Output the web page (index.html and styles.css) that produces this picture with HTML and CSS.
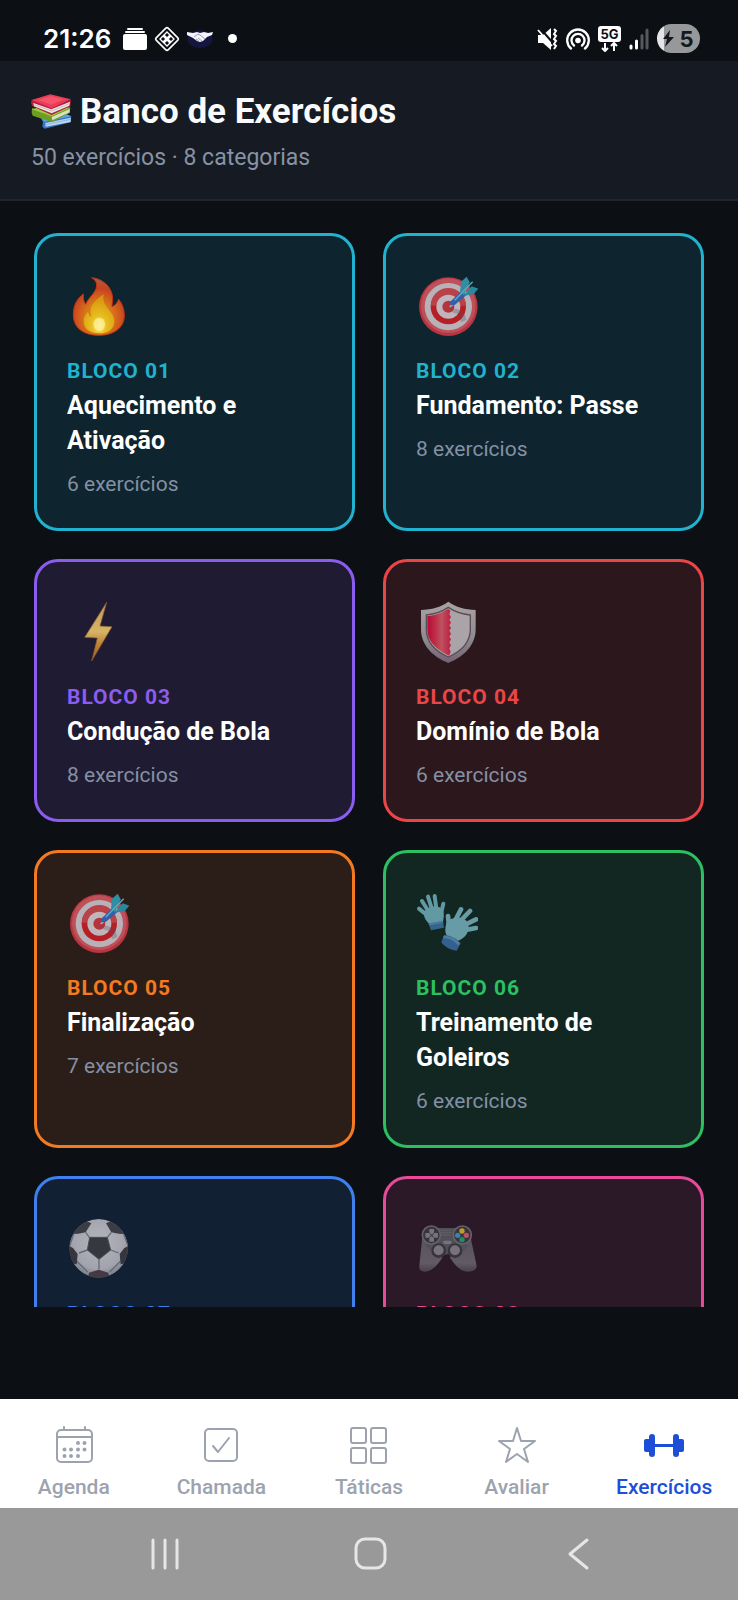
FILE: index.html
```html
<!DOCTYPE html>
<html lang="pt-BR">
<head>
    <meta charset="UTF-8">
    <meta name="viewport" content="width=device-width, initial-scale=1.0">
    <title>Banco de Exercícios</title>
    <link rel="stylesheet" href="styles.css">
</head>
<body>
    <div class="app">
        <div class="status-bar">
            <div class="status-left">
                <span class="time">21:26</span>
                <svg width="24" height="22" viewBox="0 0 24 22" fill="#fff">
                    <rect x="4" y="0" width="16" height="2" rx="1"/>
                    <rect x="2" y="3" width="20" height="2" rx="1"/>
                    <rect x="0" y="6" width="24" height="16" rx="2"/>
                </svg>
                <svg width="26" height="26" viewBox="0 0 26 26" fill="none" stroke="#fff">
                    <rect x="4.500" y="4.500" width="17" height="17" rx="2" stroke-width="1.600" transform="rotate(45 13 13)"/>
                    <path d="M13 6l3 3-3 3-3-3zM13 20l3-3-3-3-3 3zM6 13l3-3 3 3-3 3zM20 13l-3-3-3 3 3 3zM9 9l8 8M17 9l-8 8" stroke-width="1.300"/>
                </svg>
                <svg width="26" height="20" viewBox="0 0 26 20">
                    <ellipse cx="13" cy="10" rx="12.500" ry="9" fill="#15163f"/>
                    <path d="M0 3l6 1 4-1 3 1 4-1 4 1 5-1-1 3-5 2-4 4-3 1-3-1-4-3-4-2-2-1z" fill="#f4f5fb"/>
                    <path d="M7 8l4-3 2 1 5 4M9 10l3 2M11 9l4 3" fill="none" stroke="#8288a5" stroke-width=".8"/>
                </svg>
                <span class="dot"></span>
            </div>
            <div class="status-right">
                <svg width="21" height="22" viewBox="0 0 21 22" fill="#fff">
                    <path d="M1 7h5l8-7v22l-8-7H1z"/>
                    <path d="M3 0l13 15" stroke="#0d1015" stroke-width="2"/>
                    <path d="M1 2l14 16" stroke="#fff" stroke-width="1.800"/>
                    <path d="M17 1l2 2-2 3 2 2-2 3 2 2-2 3 2 2-2 3" fill="none" stroke="#fff" stroke-width="2"/>
                </svg>
                <svg width="24" height="22" viewBox="0 0 24 22" fill="none" stroke="#fff" stroke-width="2.300" stroke-linecap="round">
                    <circle cx="12" cy="12.500" r="2.800" fill="#fff" stroke="none"/>
                    <path d="M8 17.500a6.500 6.500 0 1 1 8 0M5 20.500a10.800 10.800 0 1 1 14 0"/>
                </svg>
                <svg width="23" height="26" viewBox="0 0 23 26">
                    <rect width="23" height="16" rx="3" fill="#fff"/>
                    <text x="11.500" y="13" class="net-text" text-anchor="middle">5G</text>
                    <path d="M7 17v8M4 22l3 3 3-3M16 25v-8M13 20l3-3 3 3" fill="none" stroke="#fff" stroke-width="2"/>
                </svg>
                <svg width="20" height="22" viewBox="0 0 20 22" stroke-width="3" stroke-linecap="round">
                    <path d="M2 18v2M7.500 13v7" stroke="#fff"/>
                    <path d="M13 7.500v12.500M18 2v18" stroke="#55585d"/>
                </svg>
                <div class="battery">
                    <svg width="11" height="17" viewBox="0 0 11 17" fill="#15181d"><path d="M7 0L0 9h4l-2 8 9-10H6z"/></svg>
                    <span>5</span>
                </div>
            </div>
        </div>

        <header class="header">
            <h1>
                <svg width="41" height="35" viewBox="0 0 123 105">
                    <path d="M25 65L75 48l46 19-2 18-78 19-7-6 2-14z" fill="#3978c8"/>
                    <path d="M43 87l76-16v13L44 98z" fill="#b9d5f0"/>
                    <path d="M43 92l76-16" stroke="#7fa5cf" stroke-width="2"/>
                    <path d="M26 66l14 17 80-16-44-19z" fill="#5ba2e8"/>
                    <path d="M3 42l57 18 58-20-2 17-53 27L5 65l-3-9z" fill="#6f9d22"/>
                    <path d="M62 69l54-24v10L64 79z" fill="#d6e2bd"/>
                    <path d="M3 46l59 21 55-26-57-12z" fill="#9bcc42"/>
                    <path d="M2 18l60 22 58-23-2 20-56 26L4 37l-4-9z" fill="#b51e3b"/>
                    <path d="M7 27l54 19 56-23-2 12-53 23L9 37z" fill="#eee3e4"/>
                    <path d="M8 31l54 20 53-22" fill="none" stroke="#b9a6aa" stroke-width="2"/>
                    <path d="M1 18L58 1l62 15-58 27z" fill="#ec3b57"/>
                    <path d="M20 18l39-12 40 10-38 16z" fill="#f5536a"/>
                </svg>
                <span>Banco de Exercícios</span>
            </h1>
            <p>50 exercícios · 8 categorias</p>
        </header>

        <main class="content">
            <div class="grid">
                <a href="#bloco-01" class="card cyan">
                    <svg class="emoji" viewBox="0 0 186 186">
                        <defs>
                            <radialGradient id="fire-out" cx=".5" cy=".7" r=".65"><stop offset=".4" stop-color="#d97a18"/><stop offset=".8" stop-color="#c9421f"/><stop offset="1" stop-color="#b05a3c"/></radialGradient>
                            <radialGradient id="fire-in" cx=".5" cy=".8" r=".7"><stop offset="0" stop-color="#fff3a0"/><stop offset=".35" stop-color="#e8c020"/><stop offset="1" stop-color="#d9960f"/></radialGradient>
                        </defs>
                        <path d="M74 8c36 3 64 32 63 65-1 11-2 17-2 22 9-3 15-10 20-22 12 15 17 31 17 49 0 36-32 59-76 59-46 0-77-22-77-62 0-28 11-48 30-62-1 13 1 23 7 31 8-21 31-34 33-55 1-11-5-20-15-25z" fill="url(#fire-out)" stroke="#bd3418" stroke-width="3"/>
                        <path d="M110 58c-4 20 3 30 14 44 12 15 18 25 18 36 0 25-18 37-45 37s-47-12-47-36c0-13 5-20 13-29 2 8 5 13 10 16-10-30 8-48 37-68z" fill="url(#fire-in)"/>
                        <ellipse cx="97" cy="148" rx="17" ry="20" fill="#fff09a" opacity=".75"/>
                    </svg>
                    <span class="block-number">BLOCO 01</span>
                    <h2>Aquecimento e Ativação</h2>
                    <p>6 exercícios</p>
                </a>

                <a href="#bloco-02" class="card cyan">
                    <svg class="emoji" viewBox="0 0 186 186">
                        <g id="target">
                            <circle cx="97" cy="95" r="88" fill="#b63540"/>
                            <circle cx="97" cy="92" r="82" fill="#bd5058"/>
                            <circle cx="97" cy="95" r="71" fill="#b9b1b8"/>
                            <circle cx="97" cy="95" r="53" fill="#b51f25"/>
                            <path d="M44 92a53 53 0 0 1 106 0z" fill="#b94148"/>
                            <circle cx="97" cy="95" r="36" fill="#bfb6bb"/>
                            <circle cx="97" cy="95" r="18" fill="#b4343d"/>
                            <path d="M98 98l13 15 17 4 7 25 16-7-6-20-21-13z" fill="#5a4c58" opacity=".3"/>
                            <path d="M99 96l5 1 22-19-6-7z" fill="#9fb5d5"/>
                            <path d="M101 82l36-35 14 14-35 29-11 1z" fill="#315faa"/>
                            <path d="M132 52l3-32 17-15 9 17-17 39z" fill="#318da1"/>
                            <path d="M142 62l25-28 20 7-14 17-31 4z" fill="#2b879c"/>
                            <path d="M116 76l54-56" stroke="#62abc0" stroke-width="4"/>
                        </g>
                    </svg>
                    <span class="block-number">BLOCO 02</span>
                    <h2>Fundamento: Passe</h2>
                    <p>8 exercícios</p>
                </a>

                <a href="#bloco-03" class="card purple">
                    <svg class="emoji" viewBox="0 0 186 186">
                        <defs>
                            <linearGradient id="bolt" x1="0" y1="0" x2="0" y2="1"><stop offset="0" stop-color="#c09a58"/><stop offset=".5" stop-color="#d5b466"/><stop offset=".7" stop-color="#c18436"/><stop offset="1" stop-color="#9c5c26"/></linearGradient>
                        </defs>
                        <path d="M119 4L53 109l38 2-17 69 61-103-36-2z" fill="url(#bolt)" stroke="#8b5b2d" stroke-width="2" stroke-linejoin="round"/>
                    </svg>
                    <span class="block-number">BLOCO 03</span>
                    <h2>Condução de Bola</h2>
                    <p>8 exercícios</p>
                </a>

                <a href="#bloco-04" class="card red">
                    <svg class="emoji" viewBox="0 0 186 186">
                        <defs>
                            <linearGradient id="rim" x1="0" y1="0" x2="0" y2="1"><stop offset="0" stop-color="#aaa3a5"/><stop offset=".6" stop-color="#8f8a90"/><stop offset="1" stop-color="#746274"/></linearGradient>
                            <linearGradient id="shield-red"><stop offset="0" stop-color="#b50b36"/><stop offset=".35" stop-color="#c02f48"/><stop offset=".6" stop-color="#bb5360"/><stop offset="1" stop-color="#c01c40"/></linearGradient>
                        </defs>
                        <path d="M97 2c23 17 49 23 82 25v58c0 44-31 81-82 101-51-20-82-57-82-101V27C48 25 74 19 97 2z" fill="url(#rim)"/>
                        <path d="M97 19c19 13 38 20 66 23v42c0 38-23 65-66 84-43-19-66-46-66-84V42c28-3 47-10 66-23z" fill="#aaa4a9" stroke="#5d4c53" stroke-width="4"/>
                        <path d="M97 23v0l6 7-3 10 5 8-5 8 5 9-5 8 5 8-5 8 5 9-5 9 5 8-5 9 5 9-5 9 4 10-5 12C57 144 34 119 34 84V45c25-3 44-9 63-22z" fill="url(#shield-red)"/>
                    </svg>
                    <span class="block-number">BLOCO 04</span>
                    <h2>Domínio de Bola</h2>
                    <p>6 exercícios</p>
                </a>

                <a href="#bloco-05" class="card orange">
                    <svg class="emoji" viewBox="0 0 186 186"><use href="#target"/></svg>
                    <span class="block-number">BLOCO 05</span>
                    <h2>Finalização</h2>
                    <p>7 exercícios</p>
                </a>

                <a href="#bloco-06" class="card green">
                    <svg class="emoji" viewBox="0 0 186 186" stroke-linecap="round" stroke-linejoin="round">
                        <g stroke="#6199a4" stroke-width="12" fill="none">
                            <path d="M36 72L9 50M40 62L18 27M50 58L36 14M62 58L56 12M74 70l8-35"/>
                        </g>
                        <path d="M24 60c8-17 40-22 54-9 8 12 6 26 2 40l-40 5C29 86 22 74 24 60z" fill="#6199a4"/>
                        <path d="M38 95l43-8 3 20-39 8z" fill="#34658c"/>
                        <path d="M41 97l38-7" stroke="#4a7a9b" stroke-width="6"/>
                        <g stroke="#679ba5" stroke-width="14" fill="none">
                            <path d="M100 112L96 72M115 90l20-38M130 90l32-33M140 102l40-20M138 116l42-8"/>
                        </g>
                        <path d="M91 94c10-20 50-25 63-4 12 24-6 52-34 58-28-6-38-22-29-54z" fill="#679ba5"/>
                        <path d="M84 129c16-1 38 10 50 25l-12 22c-19-2-36-11-46-25z" fill="#34608f"/>
                        <path d="M86 135c16 1 32 9 41 20" fill="none" stroke="#4c7fa0" stroke-width="8"/>
                    </svg>
                    <span class="block-number">BLOCO 06</span>
                    <h2>Treinamento de Goleiros</h2>
                    <p>6 exercícios</p>
                </a>

                <a href="#bloco-07" class="card blue">
                    <svg class="emoji" viewBox="0 0 186 186">
                        <defs>
                            <radialGradient id="ball" cx=".5" cy=".4" r=".6"><stop offset="0" stop-color="#b4b6bc"/><stop offset=".75" stop-color="#a2a3ad"/><stop offset="1" stop-color="#76808c"/></radialGradient>
                            <clipPath id="ball-clip"><circle cx="95" cy="91" r="88"/></clipPath>
                        </defs>
                        <g clip-path="url(#ball-clip)">
                            <circle cx="95" cy="91" r="88" fill="url(#ball)"/>
                            <path d="M67 58L56 43M121 58l12-15M131 96l24 9M61 96l-25 9M96 124v30M28 128l34 34M162 128l-34 34M20 48L8 84M170 48l13 36" fill="none" stroke="#666a76" stroke-width="4"/>
                            <path d="M68 58h53l10 38-35 28-35-28z" fill="#35383f" stroke="#4b4e58" stroke-width="3" stroke-linejoin="round"/>
                            <path d="M16 48l16-32 28-6 13 6-17 27-22 4z" fill="#3b3d45"/>
                            <path d="M174 48l-16-32-28-6-13 6 16 27 22 4z" fill="#3b3d45"/>
                            <path d="M2 82l16 8 14 18-3 31-25-5z" fill="#37363f"/>
                            <path d="M188 82l-16 8-14 18 3 31 25-5z" fill="#37363f"/>
                            <path d="M62 184l4-20 29-9 29 9 4 20z" fill="#433a46"/>
                        </g>
                    </svg>
                    <span class="block-number">BLOCO 07</span>
                </a>

                <a href="#bloco-08" class="card pink">
                    <svg class="emoji" viewBox="0 0 186 186">
                        <defs>
                            <linearGradient id="grip" x1="0" y1="0" x2="0" y2="1"><stop offset="0" stop-color="#57535c"/><stop offset=".75" stop-color="#625a65"/><stop offset="1" stop-color="#4b404b"/></linearGradient>
                        </defs>
                        <path d="M19 55l34 50 27 12c-12 20-27 37-45 43-14 4-27-2-25-17zM163 55l-34 50-28 12c12 20 27 37 45 43 16 4 37-2 36-17z" fill="url(#grip)"/>
                        <path d="M45 30h92l18 54-30 34-29-10-30 10-36-34z" fill="#525057"/>
                        <path d="M74 37h32M74 44h32M74 51h32" stroke="#625e66" stroke-width="3"/>
                        <g fill="#37343c" stroke="#66616a" stroke-width="5">
                            <circle cx="46" cy="51" r="27"/>
                            <circle cx="139" cy="51" r="27"/>
                        </g>
                        <g fill="#37343c"><circle cx="68" cy="98" r="22"/><circle cx="117" cy="98" r="22"/></g>
                        <g fill="#77727b">
                            <circle cx="68" cy="97" r="15"/>
                            <circle cx="117" cy="97" r="15"/>
                            <path d="M40 33h14v11l-7 6-7-6zM40 71h14V60l-7-6-7 6zM28 45h11l6 7-6 7H28zM66 45H55l-6 7 6 7h11z"/>
                            <rect x="82" y="68" width="24" height="10" rx="3"/>
                        </g>
                        <circle cx="138" cy="39" r="8" fill="#c29b24"/>
                        <circle cx="125" cy="52" r="8" fill="#3384b2"/>
                        <circle cx="151" cy="52" r="8" fill="#bd5264"/>
                        <circle cx="138" cy="65" r="8" fill="#218c64"/>
                    </svg>
                    <span class="block-number">BLOCO 08</span>
                </a>
            </div>
        </main>

        <nav class="tab-bar">
            <a href="#agenda" class="tab">
                <svg viewBox="0 0 42 42" fill="none" stroke="currentColor" stroke-width="2" stroke-linecap="round">
                    <rect x="4" y="6" width="35" height="32" rx="4"/>
                    <path d="M4 13h35M11 3v3M32 3v3"/>
                    <path d="M25 19h0M31.500 19h0M11.500 25.500h0M18 25.500h0M25 25.500h0M31.500 25.500h0M11.500 32h0M18 32h0M25 32h0" stroke-width="4"/>
                </svg>
                <span>Agenda</span>
            </a>
            <a href="#chamada" class="tab">
                <svg viewBox="0 0 42 42" fill="none" stroke="currentColor" stroke-width="2" stroke-linecap="round" stroke-linejoin="round">
                    <rect x="5" y="5" width="32" height="32" rx="4"/>
                    <path d="M13 22l5 6 11-14"/>
                </svg>
                <span>Chamada</span>
            </a>
            <a href="#taticas" class="tab">
                <svg viewBox="0 0 42 42" fill="none" stroke="currentColor" stroke-width="2">
                    <rect x="3" y="4" width="15" height="15" rx="2"/>
                    <rect x="23" y="4" width="15" height="15" rx="2"/>
                    <rect x="3" y="24" width="15" height="15" rx="2"/>
                    <rect x="23" y="24" width="15" height="15" rx="2"/>
                </svg>
                <span>Táticas</span>
            </a>
            <a href="#avaliar" class="tab">
                <svg viewBox="0 0 42 42" fill="none" stroke="currentColor" stroke-width="2" stroke-linejoin="round">
                    <path d="M21 4l4 13h14L28 25l4 13-11-8-11 8 4-13L3 17h14z"/>
                </svg>
                <span>Avaliar</span>
            </a>
            <a href="#exercicios" class="tab active">
                <svg viewBox="0 0 42 42" fill="currentColor">
                    <rect x="1" y="15" width="8" height="13" rx="2"/>
                    <rect x="6" y="10" width="6" height="23" rx="3"/>
                    <rect x="11" y="20" width="20" height="3"/>
                    <rect x="30" y="10" width="6" height="23" rx="3"/>
                    <rect x="33" y="15" width="8" height="13" rx="2"/>
                </svg>
                <span>Exercícios</span>
            </a>
        </nav>

        <div class="system-nav">
            <button type="button" aria-label="Recentes">
                <svg viewBox="0 0 34 34"><path d="M5 3v28M17 3v28M29 3v28"/></svg>
            </button>
            <button type="button" aria-label="Início">
                <svg viewBox="0 0 34 34"><rect x="2" y="2" width="29" height="29" rx="9"/></svg>
            </button>
            <button type="button" aria-label="Voltar">
                <svg viewBox="0 0 34 34"><path d="M27 3L10 17l17 14"/></svg>
            </button>
        </div>
    </div>
</body>
</html>
```
FILE: styles.css
```css
* {
    box-sizing: border-box;
}
body {
    margin: 0;
    font-family: Roboto, "Liberation Sans", sans-serif;
    background-color: #0c1015;
    color: #fff;
}
svg {
    display: block;
    flex-shrink: 0;
}
a {
    color: inherit;
    text-decoration: none;
}
h1, h2, p {
    margin: 0;
}
.app {
    display: flex;
    flex-direction: column;
    height: 100vh;
}
/* Phone status bar */
.status-bar {
    display: flex;
    justify-content: space-between;
    align-items: center;
    height: 61px;
    padding: 16px 38px 0 43px;
    flex-shrink: 0;
}
.status-left {
    display: flex;
    align-items: center;
    gap: 7px;
}
.status-right {
    display: flex;
    align-items: center;
    gap: 8px;
}
.time {
    font-family: Inter, sans-serif;
    font-size: 26px;
    font-weight: 600;
    line-height: 30px;
    margin-right: 5px;
}
.dot {
    width: 9px;
    height: 9px;
    margin-left: 8px;
    border-radius: 50%;
    background-color: #fff;
}
.net-text {
    font-family: Inter, sans-serif;
    font-size: 13px;
    font-weight: 700;
    fill: #0d1015;
}
.battery {
    display: flex;
    align-items: center;
    justify-content: center;
    gap: 5px;
    width: 43px;
    height: 29px;
    border-radius: 15px;
    background: linear-gradient(to right, #e4e4e4 7px, #97989a 7px);
    color: #15181d;
    font-family: Inter, sans-serif;
    font-size: 22px;
    font-weight: 700;
}
/* Page header */
.header {
    padding: 30px 31px 28px;
    background-color: #161a22;
    border-bottom: 2px solid #22262a;
    flex-shrink: 0;
}
.header h1 {
    display: flex;
    align-items: center;
    gap: 8px;
    font-size: 35px;
    font-weight: 700;
    line-height: 41px;
    color: #f8fafc;
}
.header p {
    margin-top: 12px;
    font-size: 23px;
    line-height: 27px;
    color: #8792a5;
}
/* Scrolling list of blocks */
.content {
    flex: 1;
    min-height: 0;
    margin-bottom: 92px;
    overflow: auto;
    scrollbar-width: none;
}
.grid {
    display: grid;
    grid-template-columns: 1fr 1fr;
    gap: 28px;
    padding: 32px 34px;
}
.card {
    padding: 31px 30px;
    border: 3px solid;
    border-radius: 24px;
}
.emoji {
    width: 62px;
    height: 62px;
    margin: 8px 0 22px;
}
.block-number {
    display: block;
    font-size: 21px;
    font-weight: 700;
    line-height: 25px;
    letter-spacing: 1px;
}
.card h2 {
    margin-top: 4px;
    font-size: 25px;
    font-weight: 700;
    line-height: 35px;
    color: #fff;
}
.card p {
    margin-top: 14px;
    font-size: 21px;
    line-height: 25px;
    color: #8490a4;
}
.cyan {
    color: #20b2cf;
    background-color: #0e242e;
}
.purple {
    color: #8b5cf0;
    background-color: #1f1b33;
}
.red {
    color: #ea4648;
    background-color: #2c181c;
}
.orange {
    color: #f47a22;
    background-color: #2b1e19;
}
.green {
    color: #2cc060;
    background-color: #122722;
}
.blue {
    color: #3f80ee;
    background-color: #122033;
}
.pink {
    color: #e64a98;
    background-color: #2b1927;
}
/* Bottom tabs */
.tab-bar {
    display: grid;
    grid-template-columns: repeat(5, 1fr);
    height: 109px;
    background-color: #fff;
    flex-shrink: 0;
}
.tab {
    display: flex;
    flex-direction: column;
    align-items: center;
    gap: 9px;
    padding-top: 25px;
    font-size: 21px;
    font-weight: 500;
    line-height: 25px;
    color: #9ca3af;
}
.tab svg {
    width: 42px;
    height: 42px;
}
.tab.active {
    color: #1d4ed8;
}
/* Android navigation buttons */
.system-nav {
    display: flex;
    justify-content: center;
    height: 92px;
    padding-left: 4px;
    background-color: #999;
    flex-shrink: 0;
}
.system-nav button {
    display: flex;
    align-items: center;
    justify-content: center;
    width: 28%;
    padding: 0;
    border: none;
    background: none;
}
.system-nav svg {
    width: 34px;
    height: 34px;
    fill: none;
    stroke: #e6e6e6;
    stroke-width: 3;
    stroke-linecap: round;
    stroke-linejoin: round;
}
```
